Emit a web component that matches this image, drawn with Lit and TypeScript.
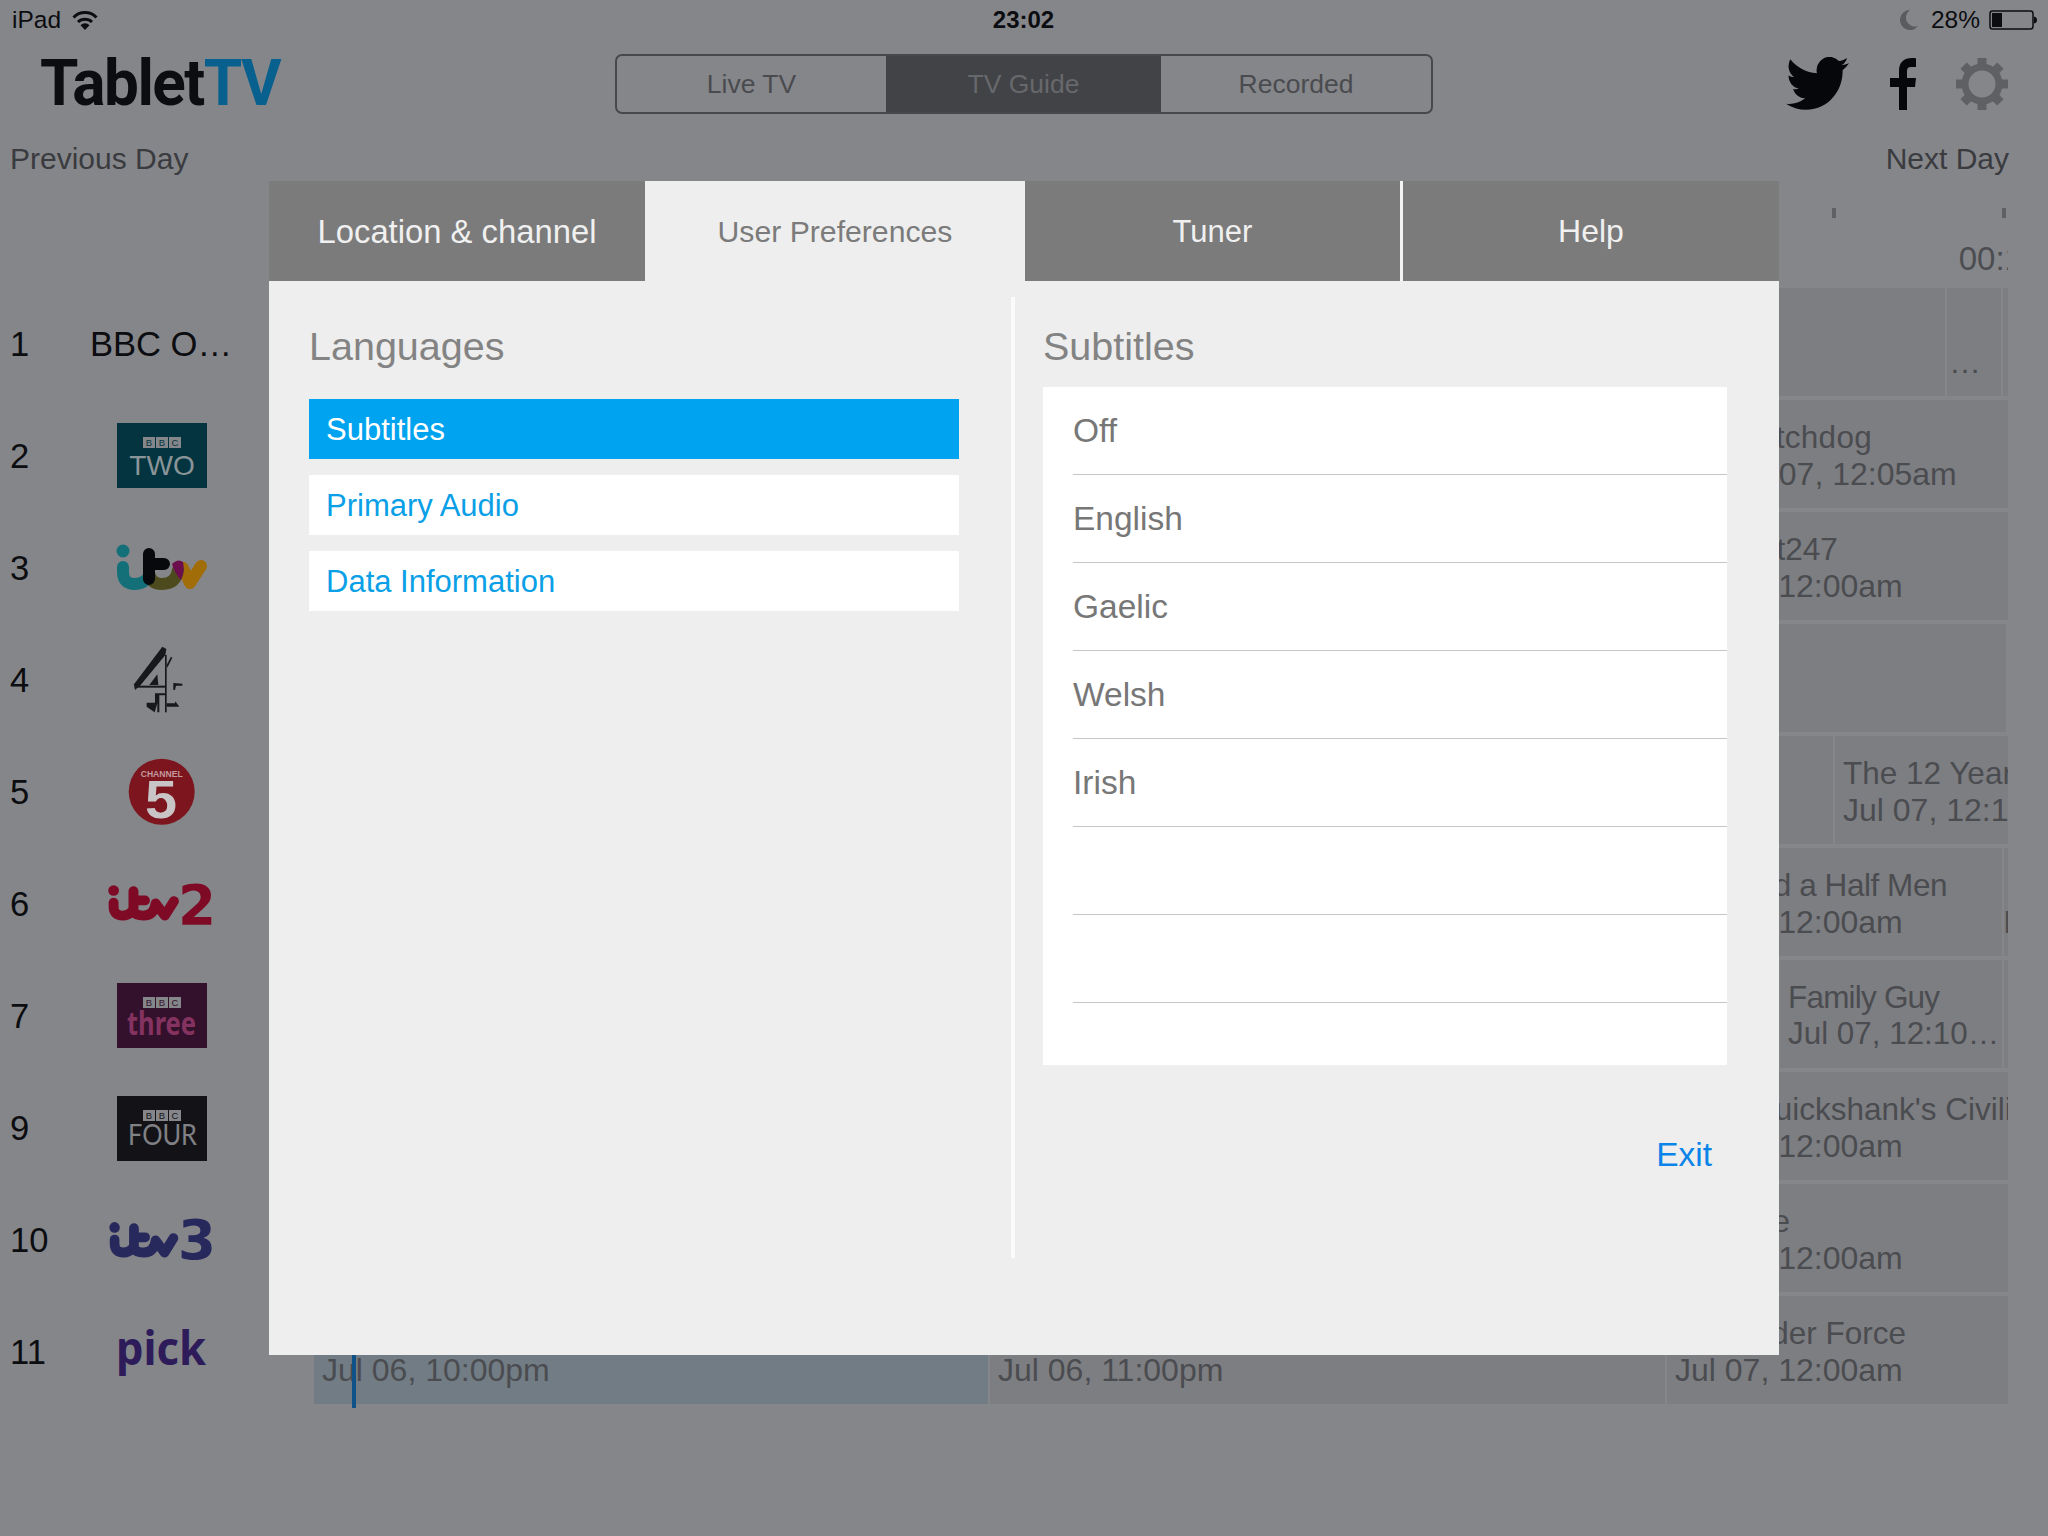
import { LitElement, html, css, svg } from "lit";
import { customElement } from "lit/decorators.js";

type Cell = { w: number; t?: string; s?: string; hl?: boolean; tight?: boolean; stem?: boolean; ell?: boolean; ls?: number };

const GRID: Cell[][] = [
  [{ w: 1631 }, { w: 54, s: "…", tight: true }, { w: 4 }],
  [{ w: 1405 }, { w: 287, t: "Watchdog", s: "Jul 07, 12:05am", ls: 0.3 }],
  [{ w: 1351 }, { w: 341, t: "Concert247", s: "Jul 07, 12:00am" }],
  [{ w: 1692 }],
  [{ w: 1519 }, { w: 173, t: "The 12 Years a Slave", s: "Jul 07, 12:15am" }],
  [{ w: 1351 }, { w: 335, t: "Two and a Half Men", s: "Jul 07, 12:00am", ls: -0.45 }, { w: 4, s: "I", stem: true }],
  [{ w: 1464 }, { w: 222, t: "Family Guy", s: "Jul 07, 12:10am", ell: true, ls: -0.8 }, { w: 4 }],
  [{ w: 1351 }, { w: 341, t: "Dan Cruickshank's Civilisation", s: "Jul 07, 12:00am" }],
  [{ w: 1351 }, { w: 341, t: "Vampire", s: "Jul 07, 12:00am" }],
  [
    { w: 674, s: "Jul 06, 10:00pm", hl: true },
    { w: 675, s: "Jul 06, 11:00pm" },
    { w: 341, t: "Bystander Force", s: "Jul 07, 12:00am" },
  ],
];

const bbcBadge = (y: number, color: string) => svg`
  <g font-family="Liberation Sans, sans-serif" font-size="9.5" text-anchor="middle" fill=${color}>
    <rect x="53" y=${y} width="12" height="11" fill="#85868a"></rect>
    <rect x="66" y=${y} width="12" height="11" fill="#85868a"></rect>
    <rect x="79" y=${y} width="12" height="11" fill="#85868a"></rect>
    <text x="59" y=${y + 9}>B</text>
    <text x="72" y=${y + 9}>B</text>
    <text x="85" y=${y + 9}>C</text>
  </g>`;

const itvMark = (color: string, t: string) => svg`
  <g transform=${t} fill="none" stroke=${color} stroke-width="13" stroke-linecap="round" stroke-linejoin="round">
    <circle cx="33" cy="39" r="7" fill=${color} stroke="none"></circle>
    <path d="M33 55 V60 Q33 72 45 72 Q52 72 58 66 Q62 72 72 72 Q86 72 88 56 L100 72 L112 53"></path>
    <path d="M59 40 V66 M59 52 H74"></path>
  </g>`;

const LOGOS = [
  html`<span class="chname">BBC O…</span>`,
  html`<svg class="logo" viewBox="0 0 142 108">
    <rect x="27" y="23" width="90" height="65" fill="#03343f"></rect>
    ${bbcBadge(37, "#03343f")}
    <text x="72" y="75" text-anchor="middle" font-family="Liberation Sans, sans-serif" font-size="28" fill="#8b9498">TWO</text>
  </svg>`,
  html`<svg class="logo" viewBox="0 0 142 108">
    <circle cx="33" cy="39" r="6.5" fill="#137079"></circle>
    <g fill="none" stroke-width="12" stroke-linecap="round" stroke-linejoin="round">
      <path d="M33 55 V60 Q33 72 45 72 Q52 72 57 67" stroke="#137079"></path>
      <path d="M93 56 L100 71 L111 54" stroke="#a06d08"></path>
      <path d="M60 64 Q62 72 72 72 Q86 72 88 58" stroke="#4d4b1e"></path>
      <path d="M59 42 V67 M59 52 H74" stroke="#08090c"></path>
    </g>
    <path d="M82 52 Q88 46 93 50 Q95 58 91 68 Q85 62 82 52 Z" fill="#6c0d4e"></path>
  </svg>`,
  html`<svg class="logo" viewBox="0 0 142 108">
    <g transform="translate(30 11) scale(0.3333)" fill="#17181b">
      <polygon points="127,35 139,42 136,60 62,150 45,165 42,148"></polygon>
      <rect x="135" y="60" width="5" height="172"></rect>
      <rect x="44" y="152" width="92" height="6"></rect>
      <polygon points="88,150 112,118 115,150"></polygon>
      <polygon points="140,90 153,65 157,68 142,98"></polygon>
      <polygon points="160,144 187,146 187,152 168,152 165,165 160,165"></polygon>
      <polygon points="140,205 165,205 166,199 178,215 140,215"></polygon>
      <polygon points="105,175 135,175 135,181 118,181 118,232 112,232 112,205 104,232 94,225 80,215 80,203 105,203"></polygon>
    </g>
  </svg>`,
  html`<svg class="logo" viewBox="0 0 142 108">
    <circle cx="71.7" cy="55.7" r="33" fill="#7c151d"></circle>
    <text x="71.7" y="41" text-anchor="middle" font-family="Liberation Sans, sans-serif" font-weight="700" font-size="8.6" fill="#c39a9d">CHANNEL</text>
    <text x="55" y="82" textLength="32" lengthAdjust="spacingAndGlyphs" font-family="Liberation Sans, sans-serif" font-weight="700" font-size="54" fill="#c9c5c7">5</text>
    <circle cx="71" cy="67" r="5" fill="#7c151d"></circle>
  </svg>`,
  html`<svg class="logo" viewBox="0 0 142 108">
    ${itvMark("#7f0a25", "translate(-1.6 12.9) scale(.764 .76)")}
    <text x="88" y="76" textLength="38" lengthAdjust="spacingAndGlyphs" font-family="DejaVu Sans, sans-serif" font-weight="700" font-size="56" fill="#7f0a25">2</text>
  </svg>`,
  html`<svg class="logo" viewBox="0 0 142 108">
    <rect x="27" y="23" width="90" height="65" fill="#33102b"></rect>
    ${bbcBadge(37, "#33102b")}
    <text x="37" y="75" textLength="69" lengthAdjust="spacingAndGlyphs" font-family="Noto Sans, sans-serif" font-weight="700" font-size="32" fill="#843360">three</text>
  </svg>`,
  html`<svg class="logo" viewBox="0 0 142 108">
    <rect x="27" y="24" width="90" height="65" fill="#131317"></rect>
    ${bbcBadge(38, "#131317")}
    <text x="38" y="73" textLength="69" lengthAdjust="spacingAndGlyphs" font-family="Lato, sans-serif" font-size="29" fill="#808185">FOUR</text>
  </svg>`,
  html`<svg class="logo" viewBox="0 0 142 108">
    ${itvMark("#27285c", "translate(0 13.8) scale(.745 .76)")}
    <text x="88" y="75" textLength="38" lengthAdjust="spacingAndGlyphs" font-family="DejaVu Sans, sans-serif" font-weight="700" font-size="55" fill="#27285c">3</text>
  </svg>`,
  html`<svg class="logo" viewBox="0 0 142 108">
    <text x="26" y="69" textLength="90" lengthAdjust="spacingAndGlyphs" font-family="Noto Sans, sans-serif" font-weight="700" font-size="46" fill="#2e1c5a">pick</text>
  </svg>`,
];

const NUMS = ["1", "2", "3", "4", "5", "6", "7", "9", "10", "11"];
const OPTIONS = ["Off", "English", "Gaelic", "Welsh", "Irish", "", "", ""];

@customElement("app-root")
export class AppRoot extends LitElement {
  static styles = css`
    :host {
      display: block;
      position: relative;
      width: 2048px;
      height: 1536px;
      overflow: hidden;
      background: #85868a;
      font-family: "Liberation Sans", Arial, sans-serif;
      color: #0c0d10;
    }
    .status {
      height: 40px;
      display: grid;
      grid-template-columns: 1fr auto 1fr;
      align-items: center;
      padding: 0 11px 0 12px;
      font-size: 24.5px;
    }
    .st-left { display: flex; align-items: center; gap: 11px; }
    .st-right { display: flex; align-items: center; justify-content: flex-end; gap: 9px; }
    .moon { margin-right: 3px; }
    .time { font-weight: 700; font-size: 24px; margin-right: 2px; }
    .header { height: 87px; display: flex; align-items: center; padding-left: 40px; }
    .brand { width: 575px; flex: none; }
    .brand div {
      font-family: Roboto, sans-serif;
      font-weight: 700;
      font-size: 64px;
      letter-spacing: -1.6px;
      line-height: 1;
      color: #0c0d10;
      white-space: nowrap;
      transform: scaleX(0.97);
      transform-origin: left center;
      padding-top: 1px;
    }
    .brand span { color: #07608e; }
    .seg {
      width: 818px;
      height: 60px;
      box-sizing: border-box;
      border: 2px solid #47484c;
      border-radius: 7px;
      display: grid;
      grid-template-columns: 269px 275px 1fr;
      overflow: hidden;
      font-size: 26.5px;
      color: #4a4b4f;
    }
    .seg div { display: flex; align-items: center; justify-content: center; padding-top: 1px; }
    .seg .on { background: #424347; color: #67686c; }
    .icons { margin-left: 353px; display: flex; align-items: center; }
    .f { margin-left: 41px; }
    .gear { margin-left: 40px; }
    .days {
      height: 64px;
      display: flex;
      justify-content: space-between;
      align-items: center;
      padding: 0 39px 0 10px;
      font-size: 30px;
      color: #3a3b3f;
    }
    .ruler {
      width: 2008px;
      height: 97px;
      box-sizing: border-box;
      overflow: hidden;
      display: flex;
      padding: 17px 0 0 1832px;
      gap: 166px;
    }
    .tick { width: 4px; display: flex; flex-direction: column; align-items: center; flex: none; }
    .tick i { display: block; width: 4px; height: 10px; background: #5f6064; flex: none; }
    .tick span {
      margin-top: 23px;
      margin-right: 8px;
      line-height: 36px;
      font-size: 33px;
      color: #4c4d51;
      white-space: nowrap;
    }
    .main { display: flex; }
    .channels { width: 314px; flex: none; display: flex; flex-direction: column; gap: 4px; }
    .ch { height: 108px; display: flex; align-items: center; padding-left: 10px; font-size: 34.6px; }
    .num { width: 80px; flex: none; padding-top: 5px; }
    .logobox { width: 142px; height: 108px; display: flex; align-items: center; justify-content: center; }
    .chname { white-space: nowrap; padding-top: 5px; }
    .logo { display: block; width: 142px; height: 108px; }
    .grid { width: 1694px; overflow: hidden; display: flex; flex-direction: column; gap: 4px; }
    .row { display: flex; gap: 2px; height: 108px; }
    .cell {
      flex: none;
      height: 108px;
      box-sizing: border-box;
      background: #7d7e82;
      padding: 20px 0 0 8px;
      overflow: hidden;
      font-size: 32px;
      line-height: 36px;
      color: #4b4c50;
    }
    .cell.hl { background: #727c85; }
    .cell.tight { padding-left: 2px; }
    .cell.stem { padding-left: 0; text-indent: -1px; }
    .cell div { white-space: nowrap; overflow: hidden; height: 36px; }
    .cell .ttl { font-size: 31.5px; line-height: 34px; }
    .cell.ell { font-size: 31.4px; }
    .cell.ell div { text-overflow: ellipsis; }
    .now {
      position: absolute;
      left: 352px;
      top: 1355px;
      width: 4px;
      height: 53px;
      background: #0e5287;
    }
    .modal {
      position: absolute;
      left: 269px;
      top: 181px;
      width: 1510px;
      height: 1174px;
      background: #eeeeee;
    }
    .tabs { display: flex; height: 100px; color: #f0f0f0; }
    .tab {
      box-sizing: border-box;
      display: flex;
      align-items: center;
      justify-content: center;
      background: #7b7b7b;
      font-size: 31px;
    }
    .tab.first { width: 376px; font-size: 32.8px; padding-top: 2px; }
    .tab.active { width: 380px; background: #eeeeee; color: #7b7b7b; font-size: 30.2px; padding-top: 2px; }
    .tab.third { width: 375px; padding-top: 2px; }
    .tab.last { width: 379px; border-left: 3px solid #f4f4f4; font-size: 32px; }
    .body { display: flex; }
    .left { width: 742px; flex: none; box-sizing: border-box; padding: 40px 52px 0 40px; }
    .divider { width: 4px; height: 961px; margin-top: 16px; background: #fbfbfb; flex: none; }
    .right { width: 684px; margin-left: 28px; padding-top: 40px; flex: none; }
    h2 {
      margin: 0;
      font-weight: 400;
      font-size: 39.5px;
      line-height: 50px;
      color: #838383;
    }
    .left h2 { margin-bottom: 28px; }
    .right h2 { margin-bottom: 16px; }
    .menu { display: flex; flex-direction: column; gap: 16px; }
    .menu div {
      height: 60px;
      box-sizing: border-box;
      padding: 2px 0 0 17px;
      display: flex;
      align-items: center;
      background: #fff;
      color: #0a9fe6;
      font-size: 31px;
    }
    .menu .sel { background: #00a3ef; color: #fff; }
    .list { background: #fff; height: 678px; padding-left: 30px; box-sizing: border-box; }
    .opt {
      height: 88px;
      box-sizing: border-box;
      border-bottom: 1px solid #c6c6c6;
      display: flex;
      align-items: center;
      font-size: 33.5px;
      color: #777777;
    }
    .opt:last-child { border-bottom: 0; height: 62px; }
    .exit {
      margin-top: 69px;
      padding-right: 15px;
      text-align: right;
      line-height: 42px;
      font-size: 33.5px;
      color: #0a84e8;
    }
  `;

  render() {
    return html`
      <div class="status">
        <div class="st-left">
          <span>iPad</span>
          <svg width="26" height="19" viewBox="0 0 26 19" fill="none" stroke="#0c0d10" stroke-width="3">
            <path d="M1.5 6.5 A16 16 0 0 1 24.5 6.5"></path>
            <path d="M6 11 A10 10 0 0 1 20 11"></path>
            <path d="M13 19 L8.5 14.2 A6 6 0 0 1 17.5 14.2 Z" fill="#0c0d10" stroke="none"></path>
          </svg>
        </div>
        <div class="time">23:02</div>
        <div class="st-right">
          <svg class="moon" width="20" height="20" viewBox="0 0 20 20">
            <path d="M11 0 A10 10 0 1 0 19 16 A9 9 0 0 1 11 0 Z" fill="#5a5b5f"></path>
          </svg>
          <span>28%</span>
          <svg width="48" height="20" viewBox="0 0 48 20">
            <rect x="1" y="1" width="43" height="18" rx="2.5" fill="none" stroke="#0c0d10" stroke-width="1.5"></rect>
            <rect x="3" y="3" width="10" height="14" fill="#0c0d10"></rect>
            <path d="M45 6.5 Q48 7 48 10 Q48 13 45 13.5 Z" fill="#0c0d10"></path>
          </svg>
        </div>
      </div>

      <div class="header">
        <div class="brand"><div>Tablet<span>TV</span></div></div>
        <div class="seg">
          <div>Live TV</div>
          <div class="on">TV Guide</div>
          <div>Recorded</div>
        </div>
        <div class="icons">
          <svg width="63" height="53" viewBox="0 2.3 24 19.5" preserveAspectRatio="none">
            <path fill="#06070a" d="M23.953 4.57a10 10 0 01-2.825.775 4.958 4.958 0 002.163-2.723c-.951.555-2.005.959-3.127 1.184a4.92 4.92 0 00-8.384 4.482C7.69 8.095 4.067 6.13 1.64 3.162a4.822 4.822 0 00-.666 2.475c0 1.71.87 3.213 2.188 4.096a4.904 4.904 0 01-2.228-.616v.06a4.923 4.923 0 003.946 4.827 4.996 4.996 0 01-2.212.085 4.936 4.936 0 004.604 3.417 9.867 9.867 0 01-6.102 2.105c-.39 0-.779-.023-1.17-.067a13.995 13.995 0 007.557 2.209c9.053 0 13.998-7.496 13.998-13.985 0-.21 0-.42-.015-.63A9.935 9.935 0 0024 4.59z"></path>
          </svg>
          <svg class="f" width="26" height="52" viewBox="0 0 26 52">
            <path fill="#06070a" d="M9 52 V29 H0 V20 H9 V13 C9 4 14 0 22 0 C24 0 26 0 26 .5 V9 H21 C18 9 17 10.5 17 13 V20 H26 L25 29 H17 V52 Z"></path>
          </svg>
          <svg class="gear" width="52" height="52" viewBox="-26 -26 52 52">
            <g fill="#5f6064">
              ${[0, 45, 90, 135, 180, 225, 270, 315].map(
                (a) => svg`<rect x="-4.5" y="-26" width="9" height="8" transform="rotate(${a})"></rect>`
              )}
            </g>
            <circle r="17" fill="none" stroke="#5f6064" stroke-width="7"></circle>
          </svg>
        </div>
      </div>

      <div class="days"><span>Previous Day</span><span>Next Day</span></div>

      <div class="ruler">
        <div class="tick"><i></i></div>
        <div class="tick"><i></i><span>00:15</span></div>
      </div>

      <div class="main">
        <div class="channels">
          ${NUMS.map(
            (n, i) => html`<div class="ch">
              <span class="num">${n}</span>
              <div class="logobox">${LOGOS[i]}</div>
            </div>`
          )}
        </div>
        <div class="grid">
          ${GRID.map(
            (row) => html`<div class="row">
              ${row.map(
                (c) => html`<div
                  class="cell ${c.hl ? "hl" : ""} ${c.tight ? "tight" : ""} ${c.stem ? "stem" : ""} ${c.ell ? "ell" : ""}"
                  style="width:${c.w}px"
                >
                  <div class="ttl" style="letter-spacing:${c.ls ?? 0}px">${c.t ?? ""}</div>
                  <div>${c.s ?? ""}</div>
                </div>`
              )}
            </div>`
          )}
        </div>
      </div>

      <div class="now"></div>

      <div class="modal">
        <div class="tabs">
          <div class="tab first">Location &amp; channel</div>
          <div class="tab active">User Preferences</div>
          <div class="tab third">Tuner</div>
          <div class="tab last">Help</div>
        </div>
        <div class="body">
          <div class="left">
            <h2>Languages</h2>
            <div class="menu">
              <div class="sel">Subtitles</div>
              <div>Primary Audio</div>
              <div>Data Information</div>
            </div>
          </div>
          <div class="divider"></div>
          <div class="right">
            <h2>Subtitles</h2>
            <div class="list">
              ${OPTIONS.map((o) => html`<div class="opt">${o}</div>`)}
            </div>
            <div class="exit">Exit</div>
          </div>
        </div>
      </div>
    `;
  }
}
